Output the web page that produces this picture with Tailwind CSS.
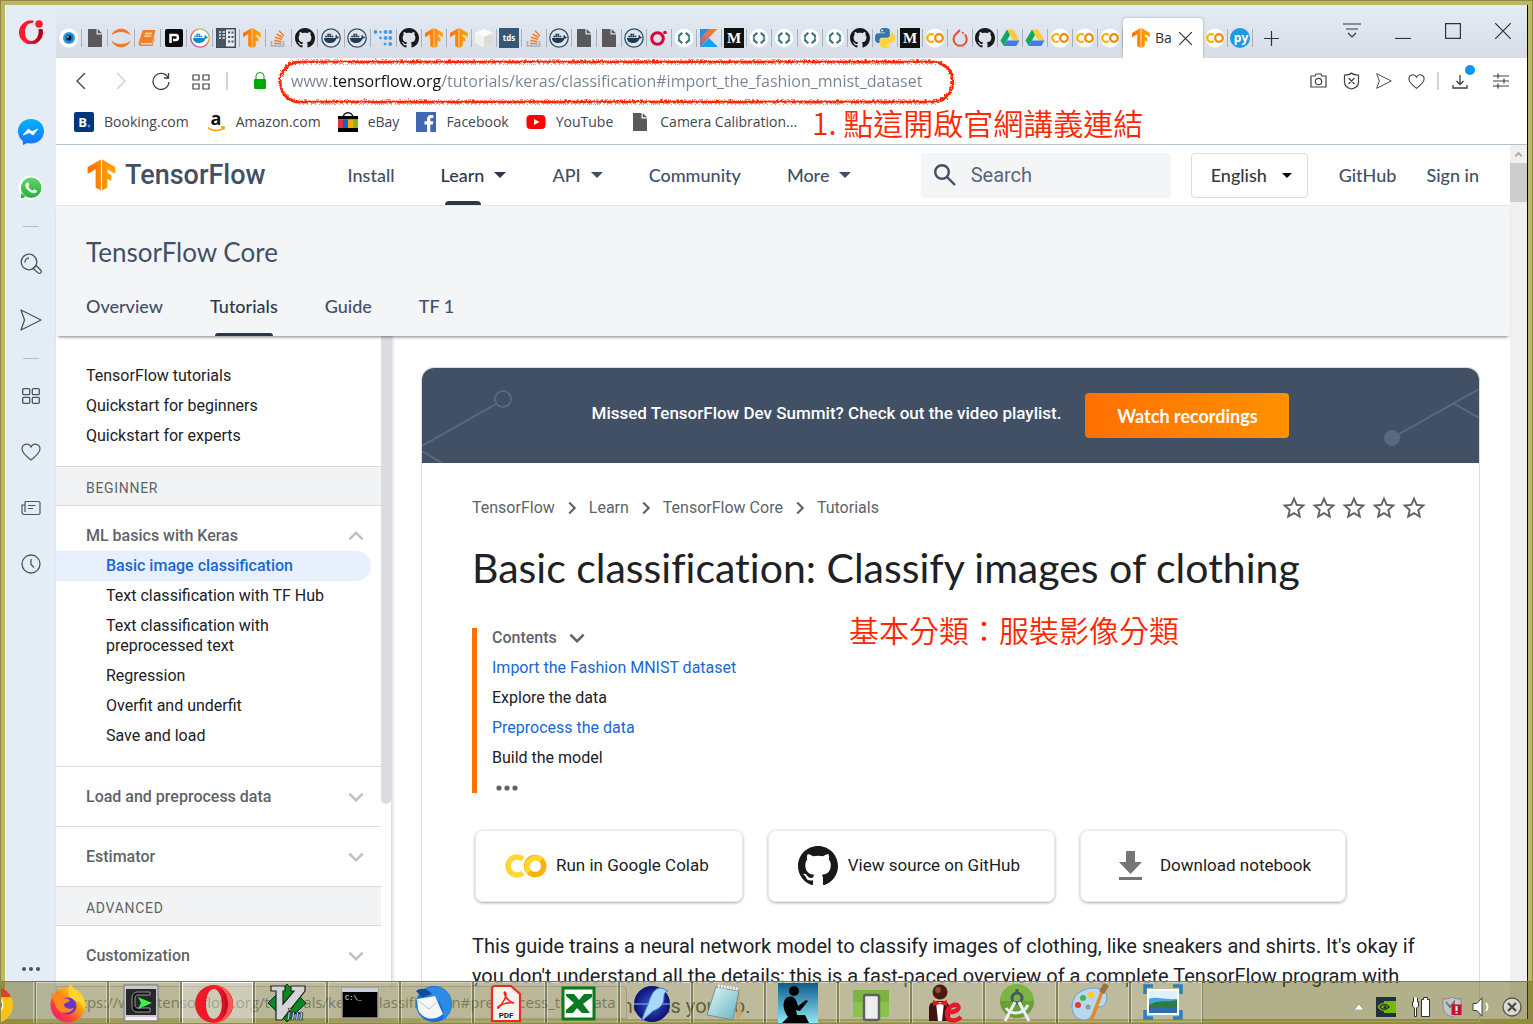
<!DOCTYPE html>
<html lang="zh-Hant">
<head>
    <meta charset="UTF-8">
    <meta name="viewport" content="width=device-width, initial-scale=1.0">
    <title>Basic classification: Classify images of clothing</title>
    <script src="https://cdn.jsdelivr.net/npm/@tailwindcss/browser@4"></script>
</head>
<body class="h-screen overflow-hidden relative flex border border-[#8f8b45] bg-[#bdb764] p-1 font-['Roboto',sans-serif] text-[#202124]">

    <!-- Icon sprite -->
    <svg class="absolute w-0 h-0" aria-hidden="true">
        <defs>
            <linearGradient id="g-tf" x1="0" x2="1"><stop offset="0" stop-color="#ff6f00"/><stop offset="1" stop-color="#ffa800"/></linearGradient>
            <linearGradient id="g-opera" x1="0" x2="1"><stop offset=".3" stop-color="#ff1b2d"/><stop offset="1" stop-color="#a70014"/></linearGradient>
            <linearGradient id="g-ring" x1="0" y1="1" x2="1" y2="0"><stop offset="0" stop-color="#7a5cff"/><stop offset=".4" stop-color="#f0544f"/><stop offset=".7" stop-color="#f9a03f"/><stop offset="1" stop-color="#2ad4d4"/></linearGradient>
            <linearGradient id="g-kotlin" x1="0" y1="1" x2="1" y2="0"><stop offset=".1" stop-color="#7f6cb1"/><stop offset=".5" stop-color="#e2725b"/><stop offset="1" stop-color="#f88909"/></linearGradient>
            <linearGradient id="g-msg" x1="0" x2="0" y1="0" y2="1"><stop offset="0" stop-color="#00b2ff"/><stop offset="1" stop-color="#1a73ff"/></linearGradient>
            <linearGradient id="g-wa" x1="0" x2="0" y1="0" y2="1"><stop offset="0" stop-color="#5fd668"/><stop offset="1" stop-color="#26b03f"/></linearGradient>
            <linearGradient id="g-fox" x1="1" x2="0" y1="0" y2="1"><stop offset="0" stop-color="#fff44f"/><stop offset=".4" stop-color="#ff980e"/><stop offset=".7" stop-color="#ff3647"/><stop offset="1" stop-color="#e31587"/></linearGradient>
            <linearGradient id="g-sky" x1="0" x2="0" y1="0" y2="1"><stop offset="0" stop-color="#0d5c8c"/><stop offset="1" stop-color="#8fe8f5"/></linearGradient>
            <linearGradient id="g-note" x1="0" x2="1" y1="0" y2="1"><stop offset="0" stop-color="#e8f7f9"/><stop offset="1" stop-color="#5fb3bf"/></linearGradient>
            <radialGradient id="g-sea"><stop offset="0" stop-color="#3a56d8"/><stop offset="1" stop-color="#0a1270"/></radialGradient>
            <filter id="rough" x="-2%" y="-10%" width="104%" height="120%"><feTurbulence baseFrequency=".25" numOctaves="2" result="n"/><feDisplacementMap in="SourceGraphic" in2="n" scale="3" xChannelSelector="R" yChannelSelector="G"/></filter>
        </defs>

        <symbol id="i-eye" viewBox="0 0 20 20"><circle cx="10" cy="10" r="9.500" fill="#fff"/><circle cx="10" cy="10" r="6" fill="#2a9fe0"/><circle cx="10" cy="10" r="4" fill="#1673b8"/><circle cx="10" cy="10" r="2.400" fill="#06131f"/><circle cx="9" cy="9" r=".8" fill="#fff"/></symbol>
        <symbol id="i-file" viewBox="0 0 20 20"><path d="M3 1h8.500v5.500H17V19H3z" fill="#58595b"/><path d="M12.700 1 17 5.300h-4.300z" fill="#58595b"/></symbol>
        <symbol id="i-jupyter" viewBox="0 0 20 20"><path d="M.5 7.500C3-1.500 17-1.500 19.500 7.500 15 2.800 5 2.800.5 7.500z M.5 12.500C3 21.500 17 21.500 19.500 12.500 15 17.200 5 17.200.5 12.500z" fill="#f37726"/></symbol>
        <symbol id="i-book" viewBox="0 0 20 20"><path d="M6.500 2h11c.8 0 1 .5.8 1.200L15.300 14c-.2.700-.6 1-1.300 1H4.500c-1 0-1 1.500 0 1.500H15l2-7 .8.500-2 7.200c-.2.600-.6.800-1.100.8H3.800C1.800 18 1.200 16 1.700 14.500L5.300 3c.2-.7.600-1 1.200-1z" fill="#f48024"/><path d="M8 5.500h7M7.200 8.200h7" stroke="#fde2c8" stroke-width="1.300"/></symbol>
        <symbol id="i-p" viewBox="0 0 20 20"><rect x="1" y="1" width="18" height="18" rx="2" fill="#0a0a0a"/><path d="M6.500 15V7h5.500c2.500 0 2.500 5 0 5H9" fill="none" stroke="#fff" stroke-width="2.500"/></symbol>
        <symbol id="i-whale" viewBox="0 0 20 20"><path d="M3 10h11c.8-.3.700-1.500.3-2.200l.9-.8c.7.500 1 1 1.100 1.700.7-.1 1.300 0 1.700.3-.3 1-1.200 1.500-2.300 1.500-1.300 3-3.600 4.500-6.500 4.500-3.500 0-6.300-2-6.200-5z"/><path d="M4.200 7.700h1.800v1.600H4.200zM6.300 7.700h1.800v1.600H6.300zM8.400 7.700h1.800v1.600H8.400zM10.500 7.700h1.800v1.600h-1.800zM6.300 5.800h1.800v1.600H6.300zM8.400 5.800h1.800v1.600H8.400z"/></symbol>
        <symbol id="i-docker" viewBox="0 0 20 20"><circle cx="10" cy="10" r="9.200" fill="#dde6ed" stroke="#33516b" stroke-width="1.300"/><use href="#i-whale" fill="#1f3a52"/></symbol>
        <symbol id="i-dockerhub" viewBox="0 0 20 20"><circle cx="10" cy="10" r="9.200" fill="#fff" stroke="url(#g-ring)" stroke-width="1.300"/><use href="#i-whale" fill="#1488c6"/></symbol>
        <symbol id="i-panel" viewBox="0 0 20 20"><path d="M.7.700h18.600v18.600H.7z" fill="#e8edf2" stroke="#3f4a57" stroke-width="1.400"/><path d="M1 1h9v18H1z" fill="#4a5664"/><path d="M3 4h2M3 7h2M3 10h2M6.500 4H9M6.500 7H9M6.500 10H9" stroke="#dfe6ec" stroke-width="1.400"/><path d="M12 4.500h2.200M12 9h2.200M12 13.500h2.200M15.500 4.500h2M15.500 9h2M15.500 13.500h2" stroke="#4a5664" stroke-width="2"/></symbol>
        <symbol id="i-tf" viewBox="0 0 24 24"><path d="M1.292 5.856L11.540 0v24l-4.095-2.378V7.603l-6.168 3.564.015-5.310zm21.430 5.311l-.014-5.310L12.460 0v24l4.095-2.378V14.870l3.092 1.788-.018-4.618-3.074-1.756V7.603l6.168 3.564z" fill="url(#g-tf)"/></symbol>
        <symbol id="i-so" viewBox="0 0 20 20"><path d="M3.500 13v5h12v-5" fill="none" stroke="#a9b0b7" stroke-width="1.600"/><path d="M6 15.500h7.500M6.200 12.500l7.300.9M7 9.300l7 2M8.500 6l6.300 3.500M11 2.800l5 5.200" stroke="#f48024" stroke-width="1.500"/></symbol>
        <symbol id="i-github" viewBox="0 0 16 16"><path d="M8 0C3.580 0 0 3.580 0 8c0 3.540 2.290 6.530 5.470 7.590.4.070.55-.17.55-.38 0-.19-.01-.82-.01-1.490-2.010.37-2.530-.49-2.690-.94-.09-.23-.48-.94-.82-1.130-.28-.15-.68-.52-.01-.53.63-.01 1.080.58 1.230.82.72 1.210 1.870.87 2.330.66.07-.52.28-.87.51-1.070-1.780-.2-3.640-.89-3.640-3.950 0-.87.31-1.590.82-2.150-.08-.2-.36-1.020.08-2.120 0 0 .67-.21 2.200.82.64-.18 1.320-.27 2-.27s1.360.09 2 .27c1.530-1.040 2.200-.82 2.200-.82.44 1.100.16 1.920.08 2.120.51.56.82 1.270.82 2.150 0 3.070-1.870 3.750-3.650 3.950.29.25.54.73.54 1.480 0 1.070-.01 1.930-.01 2.200 0 .21.15.46.55.38A8.010 8.010 0 0 0 16 8c0-4.420-3.580-8-8-8z" fill="#191717"/></symbol>
        <symbol id="i-dots" viewBox="0 0 20 20"><g fill="#4a9be0"><circle cx="2.500" cy="4" r="1.900"/><circle cx="7.500" cy="4" r="1.300"/><circle cx="12.500" cy="4" r="1.900"/><circle cx="17.300" cy="4" r="1.900"/><circle cx="12.500" cy="10" r="1.900"/><circle cx="17.300" cy="10" r="1.900"/><circle cx="7.500" cy="10" r="1.400"/><circle cx="12" cy="16" r="1.400"/><circle cx="17.300" cy="16" r="1.900"/></g></symbol>
        <symbol id="i-cube" viewBox="0 0 20 20"><path d="M10 1l9 4v10l-9 4.500L1 15V5z" fill="#f3f1ec"/><path d="M10 9l9-4v10l-9 4.500z" fill="#dedbd4"/><path d="M10 1l9 4-9 4-9-4z" fill="#fbfaf7"/></symbol>
        <symbol id="i-tds" viewBox="0 0 20 20"><path d="M0 0h20v20H0z" fill="#355876"/><text x="10" y="13" text-anchor="middle" font-family="Open Sans, sans-serif" font-size="8" font-weight="700" fill="#fff">tds</text></symbol>
        <symbol id="i-oring" viewBox="0 0 20 20"><circle cx="8.500" cy="10.500" r="5.800" fill="none" stroke="#d9003b" stroke-width="3"/><circle cx="16" cy="4.500" r="1.800" fill="#d9003b"/></symbol>
        <symbol id="i-code" viewBox="0 0 20 20"><circle cx="10" cy="10" r="9.200" fill="#fff"/><path d="M8.300 4.800 5 7.800v4.400l3.300 3M11.700 4.800l3.300 3v4.400l-3.300 3" fill="none" stroke="#3f7077" stroke-width="2.200"/><path d="M5 8.500v3M15 8.500v3" stroke="#5fb5bf" stroke-width="1.400"/></symbol>
        <symbol id="i-kotlin" viewBox="0 0 20 20"><path d="M1 1h17.500L1 19z" fill="url(#g-kotlin)"/><path d="M1 1h9L1 10z" fill="#1f93e0"/><path d="M1 19l9-9 9 9z" fill="#19a0f5"/></symbol>
        <symbol id="i-medium" viewBox="0 0 20 20"><path d="M0 0h20v20H0z" fill="#12100e"/><text x="10" y="15" text-anchor="middle" font-family="Liberation Serif, serif" font-size="15" font-weight="700" fill="#fff">M</text></symbol>
        <symbol id="i-pysnake" viewBox="0 0 24 24"><path d="M14.250.18l.9.2.73.26.59.3.45.32.34.34.25.34.16.33.1.3.04.26.02.2-.01.13V8.500l-.05.63-.13.55-.21.46-.26.38-.3.31-.33.25-.35.19-.35.14-.33.1-.3.07-.26.04-.21.02H8.770l-.69.05-.59.14-.5.22-.41.27-.33.32-.27.35-.2.36-.15.37-.1.35-.07.32-.04.27-.02.21v3.060H3.170l-.21-.03-.28-.07-.32-.12-.35-.18-.36-.26-.36-.36-.35-.46-.32-.59-.28-.73-.21-.88-.14-1.050-.05-1.230.06-1.220.16-1.040.24-.87.32-.71.36-.57.4-.44.42-.33.42-.24.4-.16.36-.1.32-.05.24-.01h8.380v-.83H6.180l-.01-2.750-.02-.37.05-.34.11-.31.17-.28.25-.26.31-.23.38-.2.44-.18.51-.15.58-.12.64-.1.71-.06.77-.04.84-.02 1.270.05z"/></symbol>
        <symbol id="i-python" viewBox="0 0 24 24"><use href="#i-pysnake" width="24" height="24" fill="#3776ab"/><use href="#i-pysnake" width="24" height="24" fill="#ffd43b" transform="rotate(180 12 12)"/><circle cx="8.500" cy="2.900" r="1" fill="#fff"/><circle cx="15.500" cy="21.100" r="1" fill="#fff"/></symbol>
        <symbol id="i-colab" viewBox="0 0 24 24"><path d="M10.300 8.300a4.900 4.900 0 1 0 0 7.400" fill="none" stroke="#fdd835" stroke-width="3"/><circle cx="17" cy="12" r="4.700" fill="none" stroke="#fbb300" stroke-width="3"/><path d="M13.700 15.300a4.700 4.700 0 0 1 6.600-6.600" fill="none" stroke="#fdd835" stroke-width="3"/></symbol>
        <symbol id="i-colabtab" viewBox="0 0 20 20"><circle cx="10" cy="10" r="9.500" fill="#fff"/><path d="M8.700 7.100a3.900 3.900 0 1 0 0 5.800" fill="none" stroke="#ffb300" stroke-width="2.300"/><circle cx="14" cy="10" r="3.800" fill="none" stroke="#f08a00" stroke-width="2.300"/></symbol>
        <symbol id="i-torch" viewBox="0 0 20 20"><path d="M10 2 5.500 6.500a6.600 6.600 0 1 0 9.300 0" fill="none" stroke="#ee4c2c" stroke-width="2"/><circle cx="12.800" cy="4.800" r="1.100" fill="#ee4c2c"/></symbol>
        <symbol id="i-drive" viewBox="0 0 20 20"><path d="M7 1.500h6.200l6.300 11h-6.300z" fill="#fc3"/><path d="M7 1.500 10 7 3.800 18 .5 12.500z" fill="#11a861"/><path d="M7 12.500h12.500L16.300 18H3.800z" fill="#3f7ee8"/></symbol>
        <symbol id="i-py" viewBox="0 0 20 20"><circle cx="10" cy="10" r="10" fill="#1e9be0"/><text x="11" y="14" text-anchor="middle" font-family="Open Sans, sans-serif" font-size="12" font-weight="700" fill="#fff">py</text></symbol>
        <symbol id="i-star" viewBox="0 0 24 24"><path d="M22 9.240l-7.190-.62L12 2 9.190 8.630 2 9.240l5.460 4.730L5.820 21 12 17.270 18.180 21l-1.630-7.030L22 9.240zM12 15.400l-3.760 2.270 1-4.280-3.320-2.880 4.380-.38L12 6.100l1.710 4.040 4.380.38-3.320 2.880 1 4.280L12 15.400z"/></symbol>
        <symbol id="i-down" viewBox="0 0 24 24"><path d="M6.300 7.700 12 13.400l5.700-5.700 1.800 1.800L12 17 4.500 9.500z"/></symbol>
        <symbol id="i-caret" viewBox="0 0 12 6"><path d="M0 0h12L6 6z"/></symbol>
        <symbol id="i-heart" viewBox="0 0 20 20"><path d="M10 18C6 15 1 11 1 6.800 1 2 7.500.3 10 5c2.500-4.700 9-3 9 1.800C19 11 14 15 10 18z" fill="none" stroke="currentColor" stroke-width="1.200"/></symbol>
        <symbol id="i-send" viewBox="0 0 22 22"><path d="M1 1l20 10L1 21l3.500-10z" fill="none" stroke="currentColor" stroke-width="1.300" stroke-linejoin="round"/></symbol>
        <symbol id="i-grid" viewBox="0 0 18 18"><g fill="none" stroke="currentColor" stroke-width="1.300"><rect x=".7" y="1.700" width="7" height="6" rx="1"/><rect x="10.300" y="1.700" width="7" height="6" rx="1"/><rect x=".7" y="10.300" width="7" height="6" rx="1"/><rect x="10.300" y="10.300" width="7" height="6" rx="1"/></g></symbol>

        <!-- Taskbar icons -->
        <symbol id="t-firefox" viewBox="0 0 40 40"><circle cx="20" cy="22" r="17.500" fill="url(#g-fox)"/><path d="M22 1c4 3 4 6 7 8 6 5 9 10 8 18-4-8-8-10-13-9-4-5-5-11-2-17z" fill="#ffd52e"/><circle cx="20" cy="23" r="8.500" fill="#6a35c9"/><path d="M3 10c5 1 9 2 12 6 4-1 6 0 7 2l-6 3c0 4 5 6 10 4-3 6-14 7-18-1C6 19 4 15 3 10z" fill="#ff8a1a"/></symbol>
        <symbol id="t-cygwin" viewBox="0 0 40 40"><path d="M3 2h34v36H3z" fill="#c9c9c9" stroke="#777"/><path d="M5 6h30v26H5z" fill="#26282a"/><path d="M5 34h30v3H5z" fill="#f0f0f0"/><path d="M29 12V9H16c-3 0-5 3-5 6v8c0 4 2 6 5 6h13v-4H17c-2 0-3-1-3-3v-6c0-3 1-4 3-4z" fill="#111" stroke="#999"/><path d="M17 14l14 6-14 6 3-6z" fill="#3cf04a"/></symbol>
        <symbol id="t-opera" viewBox="0 0 40 40"><path fill-rule="evenodd" d="M20 2a19 19 0 1 1 0 38 19 19 0 1 1 0-38zm0 4c-5 0-8 7-8 15s3 15 8 15 8-7 8-15-3-15-8-15z" fill="#f0192b"/><path d="M15 6C26-1 39 8 39 21S26 43 15 36c6 3 13-3 13-15S21 3 15 6z" fill="url(#g-opera)"/><path d="M20 2a19 19 0 0 1 0 38c8-1 14-9 14-19S28 3 20 2z" fill="#ff5a52"/></symbol>
        <symbol id="t-vim" viewBox="0 0 40 40"><path d="M20 1l19 19-19 19L1 20z" fill="#0a8a1f" stroke="#04324a"/><path d="M4 3h14v5h-2v13L27 8h-3V3h14v5L15 37H9V8H4z" fill="#d3d5d6" stroke="#222" stroke-width="1.200"/><text x="28" y="37" text-anchor="middle" font-family="Liberation Serif, serif" font-style="italic" font-weight="700" font-size="16" fill="#ddd" stroke="#111" stroke-width=".7">im</text></symbol>
        <symbol id="t-cmd" viewBox="0 0 40 40"><path d="M2 5h36v30H2z" fill="#000" stroke="#9a9a9a" stroke-width="1.500"/><path d="M2 5h36v4H2z" fill="#c8cdd6"/><text x="5" y="17" font-family="Liberation Mono, monospace" font-size="7" fill="#fff">C:\_</text></symbol>
        <symbol id="t-tbird" viewBox="0 0 40 40"><circle cx="21" cy="21" r="18" fill="#1e6fd0"/><path d="M6 12C14 0 34 2 38 16c2 9-2 18-9 22 4-10 0-20-10-25z" fill="#2a8be8"/><path d="M4 16l18-3 8 18c-9 8-22 5-25-5z" fill="#f4f6fa"/><path d="M4 17l12 9 9-8" fill="none" stroke="#b9c3d1"/><path d="M3 8c6-4 12-2 16 3l-10 3z" fill="#0e4b9c"/></symbol>
        <symbol id="t-pdf" viewBox="0 0 40 40"><path d="M9 3h16l9 8v27H6V6c0-2 1-3 3-3z" fill="#f7f4f0" stroke="#ee2a1e" stroke-width="2.200"/><path d="M12 24c5-3 10-12 7-15-2 0 1 9 9 11-3-1-11 0-14 3-1 2-3 3-2 1z" fill="none" stroke="#ee2a1e" stroke-width="1.600"/><text x="20" y="35" text-anchor="middle" font-family="Roboto, sans-serif" font-size="8" font-weight="700" fill="#222">PDF</text></symbol>
        <symbol id="t-excel" viewBox="0 0 40 40"><path d="M4 5h31v31H4z" fill="#fff" stroke="#0b7a1c" stroke-width="3"/><path d="M7 11h8l5 6 5-6h8v3L24 21l7 9h-8l-5-5-4 5H7v-3l8-7-8-7z" fill="#0b7a1c"/></symbol>
        <symbol id="t-sea" viewBox="0 0 40 40"><circle cx="20" cy="21" r="18" fill="url(#g-sea)"/><path d="M2 21h36" stroke="#9fb8ff"/><path d="M27 5c5 0 6 2 9 3-3 1-4 2-4 6 0 8-5 12-11 14L10 38c1-7 4-11 6-17 2-5 4-14 11-16z" fill="#a9d8fb" stroke="#3a7fd0"/></symbol>
        <symbol id="t-note" viewBox="0 0 40 40"><path d="M34 8l3 24-6 6z" fill="#c9a86a"/><path d="M11 4l23 4-6 29-26-5z" fill="url(#g-note)" stroke="#7a8d92"/><path d="M13 3l20 3" stroke="#eee" stroke-width="3" stroke-dasharray="2 1"/></symbol>
        <symbol id="t-kindle" viewBox="0 0 40 40"><path d="M0 0h40v40H0z" fill="url(#g-sky)"/><circle cx="16" cy="8" r="5" fill="#000"/><path d="M8 15c7-4 10 0 12 8l8-6 2 1-8 10-4-1 1 5h8l4 8H4l6-6c-5-7-6-14-2-19z" fill="#000"/></symbol>
        <symbol id="t-device" viewBox="0 0 40 40"><path d="M2 7h36v27H2z" fill="#8bc34a"/><path d="M2 7h36v12H2z" fill="#7cb342"/><rect x="13" y="12" width="15" height="25" rx="2" fill="#eee" stroke="#616161" stroke-width="2.500"/></symbol>
        <symbol id="t-butler" viewBox="0 0 40 40"><circle cx="16" cy="9" r="7.500" fill="#4a1a12"/><circle cx="14" cy="7" r="3" fill="#8a4a38"/><path d="M5 38V25c0-5 4-7 11-7s9 2 10 8v12z" fill="#3d1410"/><path d="M12 19h8l-2 19h-4z" fill="#fff"/><path d="M9 17l7 3 7-3v6l-7-2-7 2z" fill="#e01818"/><path d="M22 29c10 1 14-3 12-6s-11 0-11 8 9 8 14 3" fill="none" stroke="#e6182b" stroke-width="4.500"/></symbol>
        <symbol id="t-android" viewBox="0 0 40 40"><circle cx="20" cy="18" r="17" fill="#7cb342"/><path d="M3 18a17 17 0 0 0 34 0z" fill="#689f38"/><circle cx="20" cy="15" r="5" fill="none" stroke="#455a64" stroke-width="3"/><path d="M20 6v5" stroke="#455a64" stroke-width="3"/><path d="M18 19L8 38M22 19l10 19M9 25c5 7 17 7 22-3" fill="none" stroke="#eceff1" stroke-width="3"/></symbol>
        <symbol id="t-paint" viewBox="0 0 40 40"><path d="M2 24C2 12 12 5 24 5c10 0 15 6 12 14-2 7-8 3-11 7-3 5-4 11-11 11C7 37 2 31 2 24z" fill="#b7d9ef" stroke="#6a9fc5"/><circle cx="8" cy="22" r="3" fill="#e33b2e"/><circle cx="13" cy="15" r="3" fill="#4caf50"/><circle cx="21" cy="12" r="3.200" fill="#ffc928"/><circle cx="18" cy="24" r="2.500" fill="#8a9c9c"/><path d="M33 6L21 38" stroke="#e08a2c" stroke-width="3.500"/><path d="M29 8l4-7c2-1 4 0 6 2l-5 8z" fill="#9c7048"/></symbol>
        <symbol id="t-photo" viewBox="0 0 40 40"><path d="M5 7h30v24H5z" fill="#dff2fb" stroke="#fff" stroke-width="2"/><path d="M6 16c8-3 14 1 28 0v6H6z" fill="#4aa3d8"/><path d="M6 22c10-6 18-2 28-5v8H6z" fill="#2f7a45"/><path d="M6 25h28v5H6z" fill="#2c6fae"/><path d="M2 11V3h8M30 3h8v8M38 27v8h-8M10 35H2v-8" fill="none" stroke="#2f7fc0" stroke-width="3.500"/></symbol>
    </svg>

    <div class="flex flex-1 min-w-0 border-r border-black bg-[#e4ecf5]">

        <!-- Browser side panel -->
        <aside class="w-[51px] shrink-0 flex flex-col items-center border-l border-white/60 text-[#4a5560]">
            <button class="h-[53px] flex items-center" aria-label="Opera menu">
                <svg class="w-6 h-6" viewBox="0 0 24 24"><path fill-rule="evenodd" d="M15 .8A12 12 0 1 0 23.500 9h-4c.8 6-2 11.500-6.500 12-5 .3-7-4-7-9 0-5 3-9.500 7.500-9z" fill="url(#g-opera)"/><circle cx="20" cy="4" r="3.800" fill="#ff1b2d"/></svg>
            </button>
            <button class="h-14 mt-[46px]" aria-label="Messenger">
                <svg class="w-[26px] h-[26px]" viewBox="0 0 26 26"><path d="M13 0c7.500 0 13 5.400 13 12.300S20.500 24.500 13 24.500c-1.500 0-2.700-.2-3.800-.5L5 26l-.3-4C1.800 19.700 0 16.500 0 12.300 0 5.400 5.500 0 13 0z" fill="url(#g-msg)"/><path d="M5 16l5.500-6 3.500 2.800L19.500 10 15 16l-3.500-2.600z" fill="#fff" stroke="#fff" stroke-linejoin="round"/></svg>
            </button>
            <button class="h-14" aria-label="WhatsApp">
                <svg class="w-[26px] h-[26px]" viewBox="0 0 26 26"><path d="M13 .5A12.200 12.200 0 1 1 7 23.600L.8 25.200 2.400 19A12.300 12.300 0 0 1 13 .5z" fill="#fff"/><circle cx="13.200" cy="12.700" r="10.300" fill="url(#g-wa)"/><path d="M3.500 18l4 4-5 1.400z" fill="#26b03f"/><path d="M9 7.500c.8-.5 1.200 0 1.500.7l.7 1.700c.2.500-.9 1.600-.7 2 1 1.700 2.300 2.900 4.200 3.700.5.200 1.300-1.500 1.800-1.300l2.200 1.100c.8.500-.2 2.600-2.400 2.900C12.500 18.500 7 13 7.300 10.200c.1-1.400.9-2.300 1.700-2.700z" fill="#fff"/></svg>
            </button>
            <div class="h-5 flex items-center"><div class="w-4 h-px bg-[#aebfce]"></div></div>
            <button class="h-14" aria-label="Search">
                <svg class="w-[22px] h-[22px]" viewBox="0 0 22 22" fill="none" stroke="currentColor" stroke-width="1.300"><circle cx="9" cy="9" r="7.800"/><path d="M5 9.500A4 4 0 0 1 9 5M14.500 14l1.500-1.500 5 5c1 2-1 3.500-2.800 2.500L13 15.500z"/></svg>
            </button>
            <button class="h-14" aria-label="My Flow"><svg class="w-[22px] h-[22px]"><use href="#i-send"/></svg></button>
            <div class="h-5 flex items-center"><div class="w-4 h-px bg-[#aebfce]"></div></div>
            <button class="h-14" aria-label="Speed Dial"><svg class="w-[18px] h-[18px]"><use href="#i-grid"/></svg></button>
            <button class="h-14" aria-label="Bookmarks"><svg class="w-5 h-5"><use href="#i-heart"/></svg></button>
            <button class="h-14" aria-label="News">
                <svg class="w-5 h-5" viewBox="0 0 20 20" fill="none" stroke="currentColor" stroke-width="1.200"><path d="M4 3.500h13.500a1.500 1.500 0 0 1 1.500 1.500v10a1.500 1.500 0 0 1-1.500 1.500H3A2 2 0 0 1 1 14.500V7h2.500M4 3.500V14M7 7.500h7.500M7 10.500h5"/></svg>
            </button>
            <button class="h-14" aria-label="History">
                <svg class="w-5 h-5" viewBox="0 0 20 20" fill="none" stroke="currentColor" stroke-width="1.300"><circle cx="10" cy="10" r="9"/><path d="M10 5v5.500l3 3"/></svg>
            </button>
            <button class="mt-auto mb-10 h-5" aria-label="More">
                <svg class="w-5 h-5" viewBox="0 0 20 20" fill="currentColor"><circle cx="3" cy="10" r="2"/><circle cx="10" cy="10" r="2"/><circle cx="17" cy="10" r="2"/></svg>
            </button>
        </aside>

        <div class="flex-1 min-w-0 flex flex-col">

            <!-- Tab strip -->
            <div class="h-[53px] flex items-end bg-linear-to-b from-[#e4ecf5] to-[#d7dde6]">
                <div id="tabs-a" class="w-[341px] h-10 flex items-center"></div>
                <div id="tabs-b" class="w-[726px] h-10 flex items-center"></div>
                <div class="w-20 h-10 flex items-center rounded-t-sm bg-white pl-2 font-['Open_Sans',sans-serif] text-sm text-[#333] shadow-[0_0_3px_#9aa5b1]">
                    <svg class="w-5 h-5 shrink-0"><use href="#i-tf"/></svg>
                    <span class="ml-1 w-4 overflow-hidden">Ba</span>
                    <button class="ml-2" aria-label="Close tab"><svg class="w-[13px] h-[13px]" viewBox="0 0 13 13" stroke="#333" stroke-width="1.200"><path d="M0 0l13 13M13 0L0 13"/></svg></button>
                </div>
                <div id="tabs-c" class="w-[50px] h-10 flex items-center"></div>
                <button class="ml-[11px] h-10" aria-label="New tab"><svg class="w-[15px] h-[15px]" viewBox="0 0 15 15" stroke="#333" stroke-width="1.200"><path d="M7.500 0v15M0 7.500h15"/></svg></button>
                <div class="ml-auto mb-[18px] mr-4 flex items-center gap-[34px] text-[#333]">
                    <button aria-label="Tab menu"><svg class="w-[18px] h-[18px]" viewBox="0 0 18 18" fill="none" stroke="currentColor" stroke-width="1.200"><path d="M0 2h18M3 7h12M5 11l4 4 4-4"/></svg></button>
                    <button aria-label="Minimize"><svg class="w-4 h-4" viewBox="0 0 16 16" stroke="currentColor" stroke-width="1.200"><path d="M0 15.500h16"/></svg></button>
                    <button aria-label="Maximize"><svg class="w-4 h-4" viewBox="0 0 16 16" fill="none" stroke="currentColor" stroke-width="1.200"><path d="M.6.600h14.800v14.800H.6z"/></svg></button>
                    <button aria-label="Close"><svg class="w-4 h-4" viewBox="0 0 16 16" stroke="currentColor" stroke-width="1.200"><path d="M0 0l16 16M16 0L0 16"/></svg></button>
                </div>
            </div>

            <!-- Address bar -->
            <div class="h-[46px] flex items-center bg-white pl-5 pr-[18px] text-[#3c4043]">
                <button aria-label="Back"><svg class="w-[10px] h-4" viewBox="0 0 10 16" fill="none" stroke="currentColor" stroke-width="1.300"><path d="M9 0L1 8l8 8"/></svg></button>
                <button class="ml-[30px]" aria-label="Forward"><svg class="w-[10px] h-4 text-[#c8ccd0]" viewBox="0 0 10 16" fill="none" stroke="currentColor" stroke-width="1.300"><path d="M1 0l8 8-8 8"/></svg></button>
                <button class="ml-[26px]" aria-label="Reload"><svg class="w-[18px] h-[18px]" viewBox="0 0 18 18" fill="none" stroke="currentColor" stroke-width="1.300"><path d="M16 5.500A8 8 0 1 0 17 10M16.500 1v5H12"/></svg></button>
                <button class="ml-[22px]" aria-label="Speed Dial"><svg class="w-[18px] h-[17px]" viewBox="0 0 18 17" fill="none" stroke="currentColor" stroke-width="1.200"><path d="M1 2h6v5H1zM11 2h6v5h-6zM1 11h6v5H1zM11 11h6v5h-6z"/></svg></button>
                <div class="ml-4 w-0.5 h-[18px] bg-[#d0d3d6]"></div>
                <svg class="ml-[25px] w-[14px] h-[18px] shrink-0" viewBox="0 0 14 18"><path d="M3 8V4a4 3.500 0 0 1 8 0v4" fill="none" stroke="#00a000" stroke-width="1"/><rect x="1" y="7" width="12" height="10" rx="1" fill="#00a80b"/></svg>
                <input type="text" aria-label="Address" value="www.tensorflow.org/tutorials/keras/classification#import_the_fashion_mnist_dataset"
                    class="ml-6 flex-1 min-w-0 h-9 outline-none font-['Open_Sans',sans-serif] text-base text-transparent bg-clip-text bg-[linear-gradient(90deg,#768391_41px,#111_41px,#111_150px,#768391_150px)]">
                <div class="flex items-center gap-4">
                    <button aria-label="Snapshot"><svg class="w-[17px] h-4" viewBox="0 0 17 16" fill="none" stroke="currentColor" stroke-width="1.200"><path d="M1 3h4l1-2h5l1 2h4v11H1z"/><circle cx="8.500" cy="8.500" r="3.200"/></svg></button>
                    <button aria-label="Ad blocker"><svg class="w-[17px] h-[18px]" viewBox="0 0 17 18" fill="none" stroke="currentColor" stroke-width="1.200"><path d="M8.500 1C10 2.500 13 3 15.500 3v7c0 4-3 6-7 7-4-1-7-3-7-7V3C4 3 7 2.500 8.500 1zM5.500 6l6 6M11.500 6l-6 6"/></svg></button>
                    <button aria-label="Send to My Flow"><svg class="w-4 h-4"><use href="#i-send"/></svg></button>
                    <button aria-label="Add to bookmarks"><svg class="w-[17px] h-[17px]"><use href="#i-heart"/></svg></button>
                </div>
                <div class="ml-3 w-0.5 h-[18px] bg-[#d0d3d6]"></div>
                <button class="ml-3 relative" aria-label="Downloads">
                    <svg class="w-[18px] h-4" viewBox="0 0 18 16" fill="none" stroke="currentColor" stroke-width="1.300"><path d="M9 2v9M5.500 8L9 11.500 12.500 8M2 12v3h14v-3"/></svg>
                    <span class="absolute -top-2 -right-1.5 w-2.5 h-2.5 rounded-full bg-[#0a94ff]"></span>
                </button>
                <button class="ml-6" aria-label="Easy setup"><svg class="w-4 h-4" viewBox="0 0 16 16" fill="none" stroke="currentColor" stroke-width="1.200"><path d="M0 3h16M0 8h16M0 13h16M5 .5v5M11 5.500v5M5 10.500v5"/></svg></button>
            </div>

            <!-- Bookmarks -->
            <nav class="h-[41px] flex items-center gap-[17px] border-b border-[#b4c2ce] bg-white pl-[18px] pb-1 font-['Open_Sans',sans-serif] text-sm text-[#3f474f]">
                <a href="#" class="flex items-center gap-2.5"><svg class="w-5 h-5" viewBox="0 0 20 20"><rect width="20" height="20" rx="2" fill="#003580"/><text x="8.500" y="15" text-anchor="middle" font-family="Open Sans, sans-serif" font-size="13" font-weight="700" fill="#fff">B</text><circle cx="15" cy="14" r="1.500" fill="#1fa6e8"/></svg>Booking.com</a>
                <a href="#" class="flex items-center gap-2.5"><svg class="w-5 h-5 overflow-visible" viewBox="0 0 20 20"><text x="10" y="13" text-anchor="middle" font-family="Open Sans, sans-serif" font-size="18" font-weight="700" fill="#111">a</text><path d="M2 15.500c4 4 12 4 15.500.5M15 15h3v2.500" fill="none" stroke="#f90" stroke-width="1.500"/></svg>Amazon.com</a>
                <a href="#" class="flex items-center gap-2.5"><svg class="w-5 h-5" viewBox="0 0 20 20"><path d="M5 6c0-7 10-7 10 0" fill="none" stroke="#111" stroke-width="1.400"/><path d="M0 4h20v3.500H0zM0 16h20v4H0z" fill="#000"/><path d="M0 7.500h5V16H0z" fill="#e53238"/><path d="M5 7.500h5V16H5z" fill="#0064d2"/><path d="M10 7.500h5V16h-5z" fill="#f5af02"/><path d="M15 7.500h5V16h-5z" fill="#86b817"/></svg>eBay</a>
                <a href="#" class="flex items-center gap-2.5"><svg class="w-5 h-5" viewBox="0 0 20 20"><path d="M0 0h20v20H0z" fill="#4267b2"/><path d="M11 20v-7.500H8.500V9.300H11V7.200C11 4.600 12.600 3 15 3h2.300v3h-1.600c-1 0-1.400.5-1.400 1.500v1.800h3l-.4 3.200h-2.600V20z" fill="#fff"/></svg>Facebook</a>
                <a href="#" class="flex items-center gap-2.5"><svg class="w-5 h-5" viewBox="0 0 20 20"><rect x=".5" y="3" width="19" height="14" rx="4" fill="#f00"/><path d="M8 7l5.500 3L8 13z" fill="#fff"/></svg>YouTube</a>
                <a href="#" class="flex items-center gap-2.5"><svg class="w-5 h-5"><use href="#i-file"/></svg>Camera Calibration...</a>
            </nav>

            <!-- Web page -->
            <div class="flex-1 min-h-0 flex bg-white">
                <div class="flex-1 min-w-0 flex flex-col">
                    <header class="h-[61px] shrink-0 flex items-center border-b border-[#e4e6e8] pl-[30px] pr-[31px] font-['Lato',sans-serif] text-lg font-medium text-[#425066]">
                        <a href="#" class="flex items-center gap-2 font-['Roboto',sans-serif] text-[27px]"><svg class="w-[31px] h-8"><use href="#i-tf"/></svg>TensorFlow</a>
                        <nav class="ml-[82px] h-full flex items-center gap-[46px]">
                            <a href="#">Install</a>
                            <a href="#" class="relative h-full flex items-center gap-2.5 text-[#2c384a]">Learn<svg class="w-3 h-1.5 fill-current"><use href="#i-caret"/></svg><span class="absolute bottom-0 left-1 w-9 h-1 rounded-t bg-[#2c384a]"></span></a>
                            <a href="#" class="flex items-center gap-2.5">API<svg class="w-3 h-1.5 fill-current"><use href="#i-caret"/></svg></a>
                            <a href="#">Community</a>
                            <a href="#" class="flex items-center gap-2.5">More<svg class="w-3 h-1.5 fill-current"><use href="#i-caret"/></svg></a>
                        </nav>
                        <label class="ml-auto w-[250px] h-[45px] flex items-center gap-3.5 rounded bg-[#f4f5f7] px-3">
                            <svg class="w-6 h-6 shrink-0" viewBox="0 0 24 24" fill="none" stroke="currentColor" stroke-width="2.400"><circle cx="9" cy="9" r="6.800"/><path d="M14 14l8 8"/></svg>
                            <input type="search" aria-label="Search" placeholder="Search" class="w-full min-w-0 outline-none font-['Roboto',sans-serif] text-xl font-normal placeholder:text-[#596678]">
                        </label>
                        <div class="relative ml-5">
                            <select aria-label="Language" class="w-[117px] h-[45px] appearance-none rounded border border-[#dadce0] bg-white pl-[19px] text-[#37393d]"><option>English</option></select>
                            <svg class="absolute right-4 top-5 w-2.5 h-[5px]"><use href="#i-caret"/></svg>
                        </div>
                        <a href="#" class="ml-[31px]">GitHub</a>
                        <a href="#" class="ml-[30px]">Sign in</a>
                    </header>

                    <section class="relative z-10 h-[130px] shrink-0 flex flex-col bg-[#f4f5f7] pl-[30px] pt-[30px] font-['Lato',sans-serif] text-[#425066] shadow-[0_3px_3px_-2px_rgba(0,0,0,0.5)]">
                        <h2 class="text-[26px] leading-8">TensorFlow Core</h2>
                        <nav class="mt-auto h-[60px] flex gap-[47px] text-lg leading-[60px] font-medium">
                            <a href="#">Overview</a>
                            <a href="#" class="relative text-[#2c384a]">Tutorials<span class="absolute bottom-0 inset-x-[5px] h-[3px] rounded-t bg-[#2c384a]"></span></a>
                            <a href="#">Guide</a>
                            <a href="#">TF 1</a>
                        </nav>
                    </section>

                    <div class="flex-1 min-h-0 flex">

                        <!-- Book nav -->
                        <div class="w-[336px] shrink-0 flex overflow-hidden border-r border-[#dadce0] shadow-[1px_0_3px_rgba(0,0,0,0.15)]">
                            <nav class="flex-1 text-base leading-5">
                                <ul class="pt-[30px] pb-2.5 pl-[30px] [&>li]:pb-2.5">
                                    <li><a href="#">TensorFlow tutorials</a></li>
                                    <li><a href="#">Quickstart for beginners</a></li>
                                    <li><a href="#">Quickstart for experts</a></li>
                                </ul>
                                <h3 class="h-10 flex items-center border-y border-[#dadce0] bg-[#f1f3f4] pt-1 pl-[30px] text-sm tracking-wider text-[#5f6368]">BEGINNER</h3>
                                <button class="w-full h-[45px] flex items-center justify-between pt-[15px] pl-[30px] pr-[13px] font-medium text-[#5f6368]">ML basics with Keras<svg class="w-6 h-6 rotate-180 fill-[#bdc1c6]"><use href="#i-down"/></svg></button>
                                <ul class="pb-[15px] [&>li]:py-[5px] [&>li]:pl-[50px]">
                                    <li class="mr-2.5 rounded-r-full bg-[#e8f0fe] font-medium text-[#1967d2]"><a href="#">Basic image classification</a></li>
                                    <li><a href="#">Text classification with TF Hub</a></li>
                                    <li class="pr-[90px]"><a href="#">Text classification with preprocessed text</a></li>
                                    <li><a href="#">Regression</a></li>
                                    <li><a href="#">Overfit and underfit</a></li>
                                    <li><a href="#">Save and load</a></li>
                                </ul>
                                <button class="w-full h-[60px] flex items-center justify-between border-t border-[#dadce0] pl-[30px] pr-[13px] font-medium text-[#5f6368]">Load and preprocess data<svg class="w-6 h-6 fill-[#bdc1c6]"><use href="#i-down"/></svg></button>
                                <button class="w-full h-[60px] flex items-center justify-between border-t border-[#dadce0] pl-[30px] pr-[13px] font-medium text-[#5f6368]">Estimator<svg class="w-6 h-6 fill-[#bdc1c6]"><use href="#i-down"/></svg></button>
                                <h3 class="h-10 flex items-center border-y border-[#dadce0] bg-[#f1f3f4] pt-1 pl-[30px] text-sm tracking-wider text-[#5f6368]">ADVANCED</h3>
                                <button class="w-full h-[60px] flex items-center justify-between pl-[30px] pr-[13px] font-medium text-[#5f6368]">Customization<svg class="w-6 h-6 fill-[#bdc1c6]"><use href="#i-down"/></svg></button>
                            </nav>
                            <div class="w-2.5 h-[468px] rounded-b-full bg-[#dadce0]"></div>
                        </div>

                        <!-- Article -->
                        <main class="flex-1 min-w-0 pl-[29px] pr-[30px] pt-[31px]">
                            <article class="rounded-t-xl border border-[#dadce0]">
                                <div class="relative h-[95px] flex items-center justify-center gap-6 overflow-hidden rounded-t-xl bg-[#425066] pr-5 text-[17px] font-medium text-white">
                                    <svg class="absolute left-0 top-0 w-24 h-[95px]" viewBox="0 0 96 95" fill="none" stroke="#5b6980" stroke-width="2"><circle cx="81" cy="31" r="8"/><path d="M74 36L0 78M0 83l20 12"/></svg>
                                    <svg class="absolute right-0 top-0 w-24 h-[95px]" viewBox="0 0 96 95" stroke="#5b6980" stroke-width="2"><circle cx="9" cy="70" r="7" fill="#5b6980"/><path d="M9 70L96 21M70 35l26 15"/></svg>
                                    <span class="pb-1">Missed TensorFlow Dev Summit? Check out the video playlist.</span>
                                    <a href="#" class="h-[45px] w-[204px] flex items-center justify-center rounded bg-linear-to-r from-[#ff6f00] to-[#ff9100] font-['Lato',sans-serif] text-lg font-bold">Watch recordings</a>
                                </div>

                                <div class="px-[50px] pt-[30px]">
                                    <div class="h-[30px] flex items-center text-base text-[#5f6368] fill-[#5f6368]">
                                        <a href="#">TensorFlow</a><svg class="mx-[7px] w-5 h-5 -rotate-90"><use href="#i-down"/></svg>
                                        <a href="#">Learn</a><svg class="mx-[7px] w-5 h-5 -rotate-90"><use href="#i-down"/></svg>
                                        <a href="#">TensorFlow Core</a><svg class="mx-[7px] w-5 h-5 -rotate-90"><use href="#i-down"/></svg>
                                        <a href="#">Tutorials</a>
                                        <div class="ml-auto flex">
                                            <button aria-label="Rate 1"><svg class="w-[30px] h-7"><use href="#i-star"/></svg></button>
                                            <button aria-label="Rate 2"><svg class="w-[30px] h-7"><use href="#i-star"/></svg></button>
                                            <button aria-label="Rate 3"><svg class="w-[30px] h-7"><use href="#i-star"/></svg></button>
                                            <button aria-label="Rate 4"><svg class="w-[30px] h-7"><use href="#i-star"/></svg></button>
                                            <button aria-label="Rate 5"><svg class="w-[30px] h-7"><use href="#i-star"/></svg></button>
                                        </div>
                                    </div>

                                    <div class="relative mt-5">
                                        <h1 class="font-['Lato',sans-serif] text-[41px] leading-[50px] [font-variant-ligatures:no-common-ligatures]">Basic classification: Classify images of clothing</h1>
                                        <p class="absolute left-[377px] top-16 font-['Noto_Sans_CJK_TC',sans-serif] text-[30px] leading-[44px] font-[350] text-[#ff2600] whitespace-nowrap">基本分類：服裝影像分類</p>
                                    </div>

                                    <div class="mt-[35px] border-l-[5px] border-[#ff6f00] pl-[15px] text-base leading-5">
                                        <button class="h-5 flex items-center gap-2 font-medium text-[#5f6368]">Contents<svg class="w-6 h-6 fill-[#5f6368]"><use href="#i-down"/></svg></button>
                                        <ul class="[&>li]:pt-2.5">
                                            <li><a href="#" class="text-[#1967d2]">Import the Fashion MNIST dataset</a></li>
                                            <li><a href="#">Explore the data</a></li>
                                            <li><a href="#" class="text-[#1967d2]">Preprocess the data</a></li>
                                            <li><a href="#">Build the model</a></li>
                                        </ul>
                                        <button class="mt-2.5 pl-1 block" aria-label="More contents"><svg class="w-[22px] h-[15px] fill-[#5f6368]" viewBox="0 0 22 15"><circle cx="3" cy="10" r="2.600"/><circle cx="11" cy="10" r="2.600"/><circle cx="19" cy="10" r="2.600"/></svg></button>
                                    </div>

                                    <div class="mt-[37px] ml-[3px] flex gap-[25px] text-[17px]">
                                        <a href="#" class="h-[72px] flex items-center gap-2 rounded-lg border border-[#e8eaed] pl-7 pr-[33px] shadow-[0_1px_3px_rgba(0,0,0,0.35)]"><svg class="w-11 h-11"><use href="#i-colab"/></svg>Run in Google Colab</a>
                                        <a href="#" class="h-[72px] flex items-center gap-2.5 rounded-lg border border-[#e8eaed] pl-[29px] pr-[34px] shadow-[0_1px_3px_rgba(0,0,0,0.35)]"><svg class="w-10 h-10"><use href="#i-github"/></svg>View source on GitHub</a>
                                        <a href="#" class="h-[72px] flex items-center gap-2.5 rounded-lg border border-[#e8eaed] pl-[29px] pr-[34px] shadow-[0_1px_3px_rgba(0,0,0,0.35)]"><svg class="w-10 h-10" viewBox="0 0 40 40" fill="#757575"><path d="M16 5h9v11h7L20.500 28 9 16h7zM9 31h23v3H9z"/></svg>Download notebook</a>
                                    </div>

                                    <p class="mt-[29px] text-xl leading-[30px]">This guide trains a neural network model to classify images of clothing, like sneakers and shirts. It's okay if you don't understand all the details; this is a fast-paced overview of a complete TensorFlow program with the details explained as you go.</p>
                                </div>
                            </article>
                        </main>
                    </div>
                </div>

                <!-- Page scrollbar -->
                <div class="w-[17px] shrink-0 flex flex-col bg-[#f0f0f0]">
                    <svg class="w-[17px] h-[18px]" viewBox="0 0 18 18" fill="none" stroke="#a8a8a8" stroke-width="2"><path d="M5.500 11.500L9 8l3.500 3.500"/></svg>
                    <div class="h-[39px] bg-[#cdcdcd]"></div>
                </div>
            </div>
        </div>
    </div>

    <!-- Link status bubble -->
    <div class="absolute left-[55px] bottom-1 h-[33px] flex items-center rounded-tr border border-[#b9bcc0] bg-[#f4f5f7] px-2.5 font-['Open_Sans',sans-serif] text-[15px] text-[#5f6870]">https://www.tensorflow.org/tutorials/keras/classification#preprocess_the_data</div>

    <!-- Annotations -->
    <svg class="absolute left-[275px] top-14 w-[680px] h-12 pointer-events-none" viewBox="0 0 680 48"><rect x="3" y="4" width="673" height="40" rx="20" fill="none" stroke="#ff2600" stroke-width="3" filter="url(#rough)"/></svg>
    <p class="absolute left-[811px] top-[99px] font-['Noto_Sans_CJK_TC',sans-serif] text-[30px] leading-[44px] font-[350] text-[#ff2600] whitespace-nowrap">1. 點這開啟官網講義連結</p>

    <!-- Taskbar -->
    <footer class="absolute z-20 inset-x-0 bottom-0 h-[42px] flex items-center overflow-hidden border-t border-[#7d7b50] bg-[#656117]/50">
        <button class="w-[33px] h-full shrink-0 flex items-center justify-end border-r border-white/40 pr-[18px]" aria-label="Chrome">
            <svg class="w-10 h-10 shrink-0" viewBox="0 0 40 40"><circle cx="20" cy="22" r="18" fill="#fbc116"/><path d="M4 13a18 18 0 0 1 32 1H20z" fill="#e33b2e"/><circle cx="20" cy="22" r="8.500" fill="#fff"/><circle cx="20" cy="22" r="7" fill="#2f7de1"/></svg>
        </button>
        <div id="tasks" class="ml-0.5 flex h-full"></div>
        <div class="ml-auto mr-2.5 mt-2 flex items-center gap-2.5">
            <svg class="mr-0.5 w-2.5 h-1.5" viewBox="0 0 10 6"><path d="M5 0l5 6H0z" fill="#fff" stroke="#777" stroke-width=".6"/></svg>
            <svg class="w-5 h-5" viewBox="0 0 20 20"><path d="M0 0h20v20H0z" fill="#22303a"/><path d="M8 4h12v12H8z" fill="#76b900"/><path d="M1.500 10c3-5 9-6 14 0-5 6-11 5-14 0z" fill="#76b900"/><path d="M4 10c2-3 6-4 9 0-3 3-7 3-9 0z" fill="none" stroke="#22303a" stroke-width="1.300"/><circle cx="9" cy="10" r="1.500" fill="#22303a"/></svg>
            <svg class="ml-1.5 w-5 h-5" viewBox="0 0 20 20" fill="#fff" stroke="#333"><path d="M9.500 2.500h2v-2h4v2h2v17h-8z"/><path d="M1.500.5V5h-1v4l2 2v8.500h2V11l2-2V5h-1V.5" fill="#fff"/></svg>
            <svg class="w-5 h-5" viewBox="0 0 20 20"><path d="M10 0c3 2 6 2 9 2v8c0 5-4 8-9 10C5 18 1 15 1 10V2c3 0 6 0 9-2z" fill="#c4c4c4" stroke="#8a8a8a"/><path d="M4 5l4 5 4-5v8" fill="none" stroke="#777" stroke-width="2"/><path d="M9.500 7.500h10V18h-10z" fill="#c8102e"/><path d="M14.500 9v5M14.500 15v1.500" stroke="#fff" stroke-width="2"/></svg>
            <svg class="w-5 h-5" viewBox="0 0 20 20"><path d="M1 6.500h4L10 .8v18.400L5 13.500H1z" fill="#fff" stroke="#444"/><path d="M14 6c2 2.500 2 5.500 0 8" fill="none" stroke="#fff" stroke-width="1.600"/></svg>
            <svg class="w-5 h-5" viewBox="0 0 20 20"><circle cx="10" cy="10" r="9" fill="#d9d9cd" stroke="#555" stroke-width="1.300"/><path d="M6 6l8 8M14 6l-8 8" stroke="#444" stroke-width="2"/></svg>
        </div>
    </footer>

    <script>
        const tabs = {
            'tabs-a': ['eye', 'file', 'jupyter', 'book', 'p', 'dockerhub', 'panel', 'tf', 'so', 'github', 'docker', 'docker', 'dots'],
            'tabs-b': ['github', 'tf', 'tf', 'cube', 'tds', 'so', 'docker', 'file', 'file', 'docker', 'oring', 'code', 'kotlin', 'medium',
                'code', 'code', 'code', 'code', 'github', 'python', 'medium', 'colabtab', 'torch', 'github', 'drive', 'drive', 'colabtab', 'colabtab', 'colabtab'],
            'tabs-c': ['colabtab', 'py'],
        };
        for (const [id, names] of Object.entries(tabs)) {
            document.getElementById(id).innerHTML = names.map(name =>
                `<button class="flex-1 h-[18px] flex items-center justify-center border-r border-[#a9b2bb]" aria-label="${name}"><svg class="w-5 h-5 shrink-0"><use href="#i-${name}"/></svg></button>`
            ).join('');
        }

        const tasks = ['firefox', 'cygwin', 'opera', 'vim', 'cmd', 'tbird', 'pdf', 'excel', 'sea', 'note', 'kindle', 'device', 'butler', 'android', 'paint', 'photo'];
        document.getElementById('tasks').innerHTML = tasks.map(name =>
            `<button class="w-[71px] mr-0.5 h-full flex items-center justify-center border border-b-0 ${name === 'opera' ? 'border-white bg-white/40' : 'border-white/40 bg-white/15'} pr-2 outline outline-[#5a5825]/50" aria-label="${name}"><svg class="w-10 h-10"><use href="#t-${name}"/></svg></button>`
        ).join('');
    </script>
</body>
</html>
